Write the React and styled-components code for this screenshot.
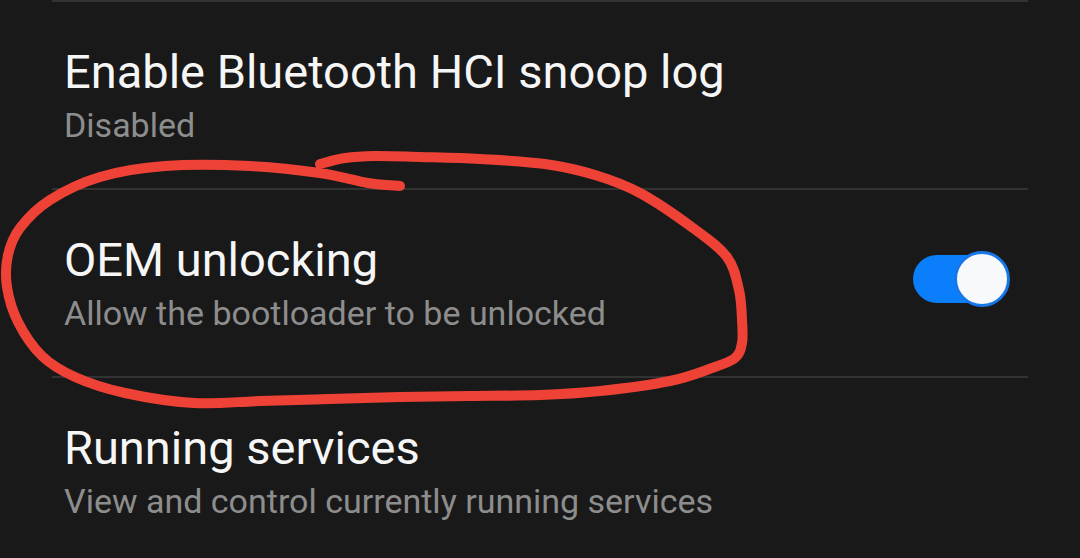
import styled, {createGlobalStyle} from "styled-components";

const GlobalStyle = createGlobalStyle`
  html, body {
    margin: 0;
    padding: 0;
    background: #191919;
  }
  body {
    font-family: Roboto, 'Noto Sans', sans-serif;
    -webkit-font-smoothing: antialiased;
  }
`

// hand drawn circle around the OEM unlocking row
const scribble = [
    [320, 164], [345, 158], [375, 156], [420, 157], [480, 159], [545, 164],
    [595, 175], [640, 193], [693, 228], [727, 257], [739, 290], [742, 320],
    [742, 343], [735, 358], [712, 368], [670, 381], [600, 391], [540, 395],
    [470, 396], [400, 397], [330, 399], [260, 401], [194, 403], [125, 393],
    [75, 377], [42, 356], [18, 322], [7, 287], [8, 255], [20, 228],
    [50, 200], [100, 177], [165, 166], [250, 166], [320, 173], [368, 183],
    [400, 186],
]

const toPath = (pts) => {
    let d = `M ${pts[0][0]} ${pts[0][1]}`
    for (let i = 0; i < pts.length - 1; i++) {
        const p0 = pts[i - 1] || pts[i]
        const p1 = pts[i]
        const p2 = pts[i + 1]
        const p3 = pts[i + 2] || p2
        const c1x = p1[0] + (p2[0] - p0[0]) / 6
        const c1y = p1[1] + (p2[1] - p0[1]) / 6
        const c2x = p2[0] - (p3[0] - p1[0]) / 6
        const c2y = p2[1] - (p3[1] - p1[1]) / 6
        d += ` C ${c1x.toFixed(1)} ${c1y.toFixed(1)} ${c2x.toFixed(1)} ${c2y.toFixed(1)} ${p2[0]} ${p2[1]}`
    }
    return d
}

const items = [
    {title: 'Enable Bluetooth HCI snoop log', summary: 'Disabled'},
    {title: 'OEM unlocking', summary: 'Allow the bootloader to be unlocked', toggle: true},
    {title: 'Running services', summary: 'View and control currently running services'},
]

export default function App() {
    return (
        <>
            <GlobalStyle />
            <Screen>
                <List>
                    {items.map((item) => (
                        <Row key={item.title}>
                            <Texts>
                                <Title>{item.title}</Title>
                                <Summary>{item.summary}</Summary>
                            </Texts>
                            {item.toggle && (
                                <Switch>
                                    <Track />
                                    <Thumb />
                                </Switch>
                            )}
                        </Row>
                    ))}
                </List>
                <Annotation viewBox="0 0 1080 558" width="1080" height="558">
                    <path d={toPath(scribble)} fill="none" stroke="#ef4236" strokeWidth="10"
                          strokeLinecap="round" strokeLinejoin="round" />
                </Annotation>
            </Screen>
        </>
    )
}

const Screen = styled.div`
  position: relative;
  width: 1080px;
  height: 558px;
  overflow: hidden;
  background: #191919;
`

const List = styled.div`
  margin: 0 52px;
  display: flex;
  flex-direction: column;
`

const Row = styled.div`
  box-sizing: border-box;
  height: 188px;
  border-top: 2px solid #323232;
  display: flex;
  align-items: center;
  padding: 0 18px 0 12px;
`

const Texts = styled.div`
  flex: 1;
  display: flex;
  flex-direction: column;
`

const Title = styled.div`
  font-size: 47px;
  line-height: 54px;
  color: #f6f6f6;
  white-space: nowrap;
`

const Summary = styled.div`
  margin-top: 6px;
  font-size: 34px;
  line-height: 40px;
  color: #8d8d8d;
  white-space: nowrap;
`

const Switch = styled.div`
  position: relative;
  width: 97px;
  height: 56px;
  flex-shrink: 0;
  margin-top: -8px;
`

const Track = styled.div`
  position: absolute;
  left: 0;
  top: 4px;
  width: 88px;
  height: 48px;
  border-radius: 24px;
  background: #0b7ffb;
`

const Thumb = styled.div`
  position: absolute;
  right: 0;
  top: 0;
  box-sizing: border-box;
  width: 56px;
  height: 56px;
  border-radius: 50%;
  border: 3px solid #1877e6;
  background: #f8f9fb;
`

const Annotation = styled.svg`
  position: absolute;
  left: 0;
  top: 0;
  pointer-events: none;
`
